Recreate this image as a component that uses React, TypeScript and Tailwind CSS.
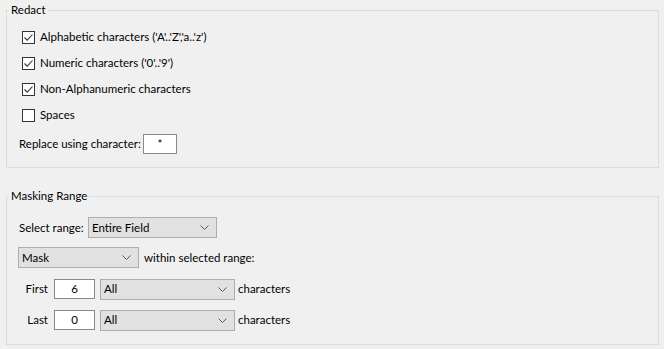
import React from "react";

const font = { fontFamily: 'Lato, "Segoe UI", Arial, sans-serif' };

function Check({ checked }: { checked: boolean }) {
  return (
    <span className="flex h-[13px] w-[13px] shrink-0 items-center justify-center border border-[#333333] bg-white">
      {checked && (
        <svg width="11" height="11" viewBox="0 0 11 11">
          <path d="M1.5 5.5 L4.2 8.2 L9.5 2.5" fill="none" stroke="#333333" strokeWidth="1.1" />
        </svg>
      )}
    </span>
  );
}

function CheckRow({ checked, label }: { checked: boolean; label: string }) {
  return (
    <div className="flex h-[26px] items-center pl-[15px]">
      <Check checked={checked} />
      <span className="ml-[5px]">{label}</span>
    </div>
  );
}

function Chevron() {
  return (
    <svg width="9" height="5" viewBox="0 0 9 5" className="shrink-0">
      <path d="M0.5 0.5 L4.5 4.5 L8.5 0.5" fill="none" stroke="#5a5a5a" strokeWidth="1" />
    </svg>
  );
}

function Dropdown({ value, width }: { value: string; width: string }) {
  return (
    <div className={`flex h-[21px] shrink-0 items-center justify-between border border-[#adadad] bg-[#e1e1e1] pl-[3px] pr-[7px] ${width}`}>
      <span>{value}</span>
      <Chevron />
    </div>
  );
}

function Input({ value, width }: { value: string; width: string }) {
  return (
    <div className={`flex h-[20px] shrink-0 items-center justify-center border border-[#8a8a8a] bg-white ${width}`}>
      {value}
    </div>
  );
}

export default function App() {
  return (
    <div className="h-[349px] w-[664px] whitespace-nowrap bg-[#f0f0f0] text-[11.5px] leading-[16px] text-black" style={font}>
      <div className="flex flex-col pt-[2px]">
        <fieldset className="ml-[6px] w-[653px] border border-[#dcdcdc] px-0 pb-[13px] pt-[6px]">
          <legend className="ml-[2px] px-[2px] leading-[16px]">Redact</legend>
          <CheckRow checked label="Alphabetic characters ('A'..'Z','a..'z')" />
          <CheckRow checked label="Numeric characters ('0'..'9')" />
          <CheckRow checked label="Non-Alphanumeric characters" />
          <CheckRow checked={false} label="Spaces" />
          <div className="mt-[6px] flex h-[20px] items-center pl-[12px]">
            <span>Replace using character:</span>
            <div className="ml-[2px]">
              <Input value="*" width="w-[34px]" />
            </div>
          </div>
        </fieldset>
        <fieldset className="ml-[6px] mt-[20px] w-[653px] border border-[#dcdcdc] px-0 pb-[14px] pt-[13px]">
          <legend className="ml-[2px] px-[2px] leading-[16px]">Masking Range</legend>
          <div className="flex h-[21px] items-center pl-[12px]">
            <span className="w-[69px]">Select range:</span>
            <Dropdown value="Entire Field" width="w-[129px]" />
          </div>
          <div className="mt-[9px] flex h-[21px] items-center pl-[11px]">
            <Dropdown value="Mask" width="w-[121px]" />
            <span className="ml-[5px]">within selected range:</span>
          </div>
          <div className="mt-[11px] flex h-[20px] items-center pl-[10px]">
            <span className="w-[37px] pr-[6px] text-right">First</span>
            <Input value="6" width="w-[41px]" />
            <div className="ml-[5px]">
              <Dropdown value="All" width="w-[135px]" />
            </div>
            <span className="ml-[3px]">characters</span>
          </div>
          <div className="mt-[11px] flex h-[20px] items-center pl-[10px]">
            <span className="w-[37px] pr-[6px] text-right">Last</span>
            <Input value="0" width="w-[41px]" />
            <div className="ml-[5px]">
              <Dropdown value="All" width="w-[135px]" />
            </div>
            <span className="ml-[3px]">characters</span>
          </div>
        </fieldset>
      </div>
    </div>
  );
}
